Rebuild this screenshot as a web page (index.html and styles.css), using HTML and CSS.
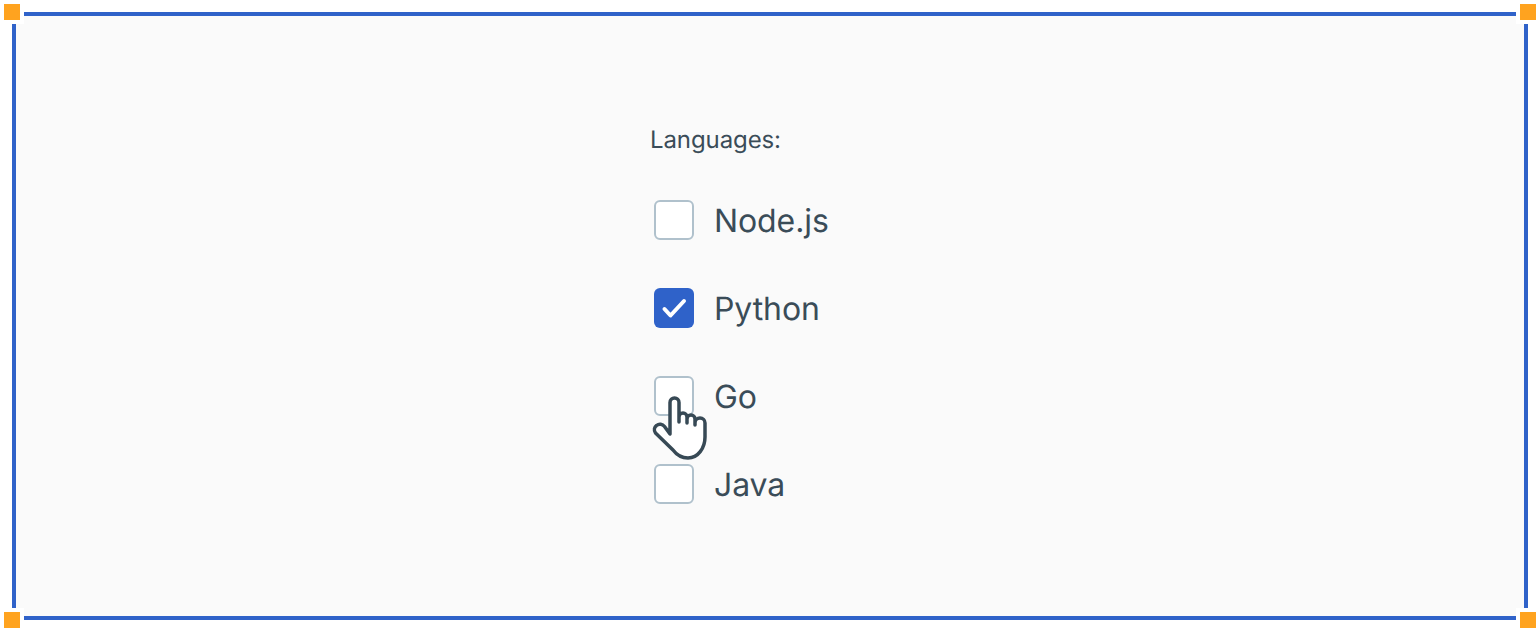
FILE: index.html
```html
<!DOCTYPE html>
<html lang="en">
<head>
<meta charset="utf-8">
<title>Languages</title>
<link rel="stylesheet" href="styles.css">
</head>
<body>
<div class="frame">
  <span class="handle handle-tl"></span>
  <span class="handle handle-tr"></span>
  <span class="handle handle-bl"></span>
  <span class="handle handle-br"></span>
  <form class="group">
    <div class="legend">Languages:</div>
    <div class="options">
      <label class="option"><span class="box"></span><span class="text">Node.js</span></label>
      <label class="option"><span class="box box-checked">
        <svg class="check" viewBox="0 0 40 40" width="40" height="40"><path d="M10.500 21l6 6.500L30 13" fill="none" stroke="#fff" stroke-width="4" stroke-linecap="round" stroke-linejoin="round"/></svg>
      </span><span class="text">Python</span></label>
      <label class="option"><span class="box box-hover">
        <svg class="cursor" viewBox="0 0 60 72" width="60" height="72"><path d="M20 44V12.500a4.500 4.500 0 0 1 9 0V32V27a4 4 0 0 1 8 0v6v-4a4 4 0 0 1 8 0v6v-2a5 5 0 0 1 10 0v14c0 11-7 21-17 21-8 0-12-4-15-8L5.500 43c-2-3-1-6 1-7.500 2.500-2 6-1.500 8 1z" fill="#fff" stroke="#374955" stroke-width="3.500" stroke-linecap="round" stroke-linejoin="round"/></svg>
      </span><span class="text">Go</span></label>
      <label class="option"><span class="box"></span><span class="text">Java</span></label>
    </div>
  </form>
</div>
</body>
</html>
```
FILE: styles.css
```css
* { box-sizing: border-box; }
html, body { margin: 0; padding: 0; background: #fff; }
body { padding: 12px; height: 632px; overflow: hidden; font-family: Inter, "Liberation Sans", sans-serif; color: #3a4c58; text-rendering: geometricPrecision; }
.frame { position: relative; height: 608px; border: 4px solid #2f62c9; background: #fafafa; padding: 112px 0 0 634px; }
.handle { position: absolute; width: 24px; height: 24px; background: #ffa31f; border: 4px solid #fff; }
.handle-tl { left: -16px; top: -16px; }
.handle-tr { right: -16px; top: -16px; }
.handle-bl { left: -16px; bottom: -16px; }
.handle-br { right: -16px; bottom: -16px; }
.legend { font-size: 24px; line-height: 24px; margin-bottom: 48px; letter-spacing: -0.1px; }
.options { display: flex; flex-direction: column; gap: 48px; padding-left: 4px; }
.option { display: flex; align-items: center; gap: 20px; font-size: 32px; line-height: 40px; height: 40px; letter-spacing: -0.1px; }
.text { padding-top: 2px; }
.box { position: relative; display: block; width: 40px; height: 40px; border: 2px solid #b0c1cc; border-radius: 6px; background: #fff; flex: none; }
.box-checked { background: #2f62c9; border: 0; }
.check { display: block; }
.cursor { position: absolute; left: -6px; top: 12px; }
```
